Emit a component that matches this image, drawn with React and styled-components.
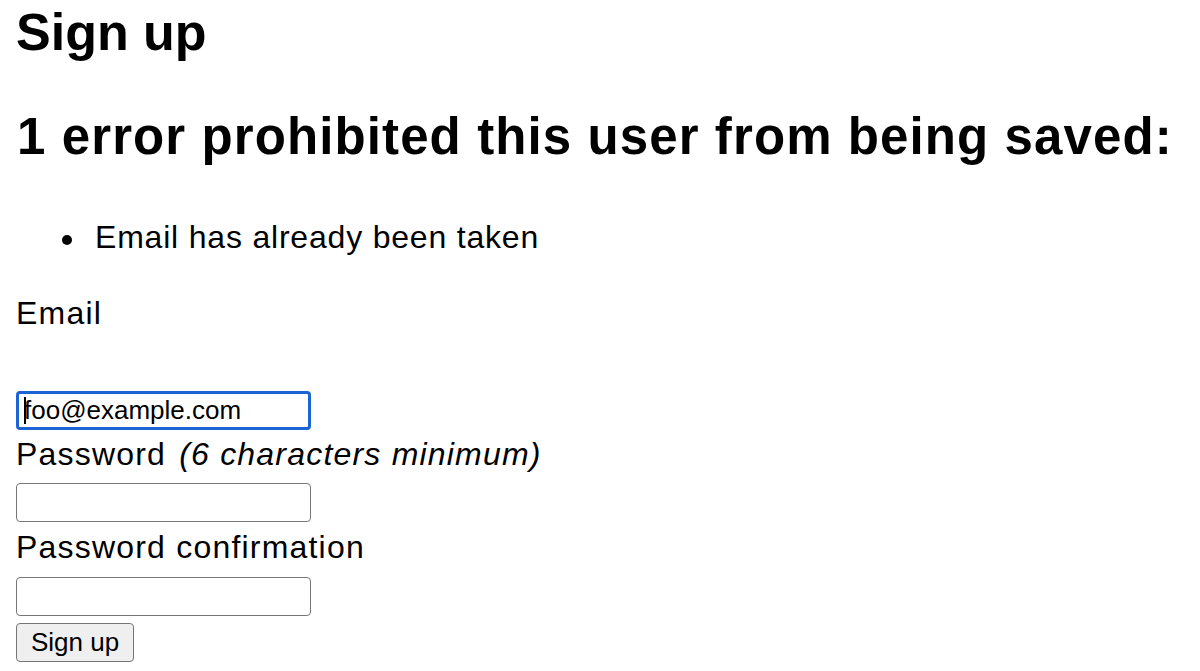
import React from "react";
import styled, { createGlobalStyle } from "styled-components";

const GlobalStyle = createGlobalStyle`
  html, body {
    margin: 0;
    padding: 0;
    background: #ffffff;
  }
  body {
    font-family: "Liberation Sans", Arial, sans-serif;
    color: #000000;
  }
`;

const Page = styled.div`
  padding: 0 16px;
`;

const Title = styled.h1`
  margin: 0;
  font-size: 52px;
  line-height: 64px;
  font-weight: 700;
`;

const ErrorTitle = styled.h2`
  margin: 41px 0 0;
  padding-left: 1px;
  font-size: 51px;
  line-height: 64px;
  font-weight: 700;
  letter-spacing: 1.1px;
  white-space: nowrap;
`;

const ErrorList = styled.ul`
  margin: 48px 0 0;
  padding-left: 79px;
  list-style: none;
`;

const ErrorItem = styled.li`
  position: relative;
  font-size: 32px;
  line-height: 40px;
  letter-spacing: 0.8px;

  &::before {
    content: "";
    position: absolute;
    left: -33px;
    top: 18px;
    width: 10px;
    height: 10px;
    border-radius: 50%;
    background: #000000;
  }
`;

const Form = styled.form`
  display: flex;
  flex-direction: column;
  align-items: flex-start;
`;

const Label = styled.label`
  display: block;
  margin-top: ${(p) => p.$gap}px;
  font-size: 32px;
  line-height: 40px;
  letter-spacing: 1.2px;
  white-space: nowrap;
`;

const Hint = styled.i`
  font-style: italic;
  margin-left: 3px;
`;

const Field = styled.div`
  position: relative;
  margin-top: ${(p) => p.$gap}px;
`;

const Input = styled.input`
  box-sizing: border-box;
  display: block;
  width: 295px;
  height: 39px;
  margin: 0;
  padding: 0 ${(p) => (p.$focused ? 5 : 7)}px;
  border: ${(p) => (p.$focused ? "3px solid #1c64d4" : "1px solid #767676")};
  border-radius: 4px;
  background: #ffffff;
  font-family: "Liberation Sans", Arial, sans-serif;
  font-size: 26px;
  color: #000000;
  outline: none;
`;

const Caret = styled.span`
  position: absolute;
  left: 8px;
  top: 6px;
  width: 2px;
  height: 27px;
  background: #000000;
`;

const Button = styled.button`
  box-sizing: border-box;
  margin-top: 7px;
  height: 39px;
  padding: 0 14px;
  border: 1px solid #767676;
  border-radius: 4px;
  background: #efefef;
  font-family: "Liberation Sans", Arial, sans-serif;
  font-size: 26px;
  color: #000000;
`;

export default function App() {
  return (
    <>
      <GlobalStyle />
      <Page>
        <Title>Sign up</Title>
        <ErrorTitle>1 error prohibited this user from being saved:</ErrorTitle>
        <ErrorList>
          <ErrorItem>Email has already been taken</ErrorItem>
        </ErrorList>
        <Form onSubmit={(e) => e.preventDefault()}>
          <Label $gap={36} htmlFor="user_email">
            Email
          </Label>
          <Field $gap={58}>
            <Input
              $focused
              id="user_email"
              type="email"
              defaultValue="foo@example.com"
            />
            <Caret />
          </Field>
          <Label $gap={4} htmlFor="user_password">
            Password <Hint>(6 characters minimum)</Hint>
          </Label>
          <Field $gap={9}>
            <Input id="user_password" type="password" />
          </Field>
          <Label $gap={5} htmlFor="user_password_confirmation">
            Password confirmation
          </Label>
          <Field $gap={10}>
            <Input id="user_password_confirmation" type="password" />
          </Field>
          <Button type="submit">Sign up</Button>
        </Form>
      </Page>
    </>
  );
}
